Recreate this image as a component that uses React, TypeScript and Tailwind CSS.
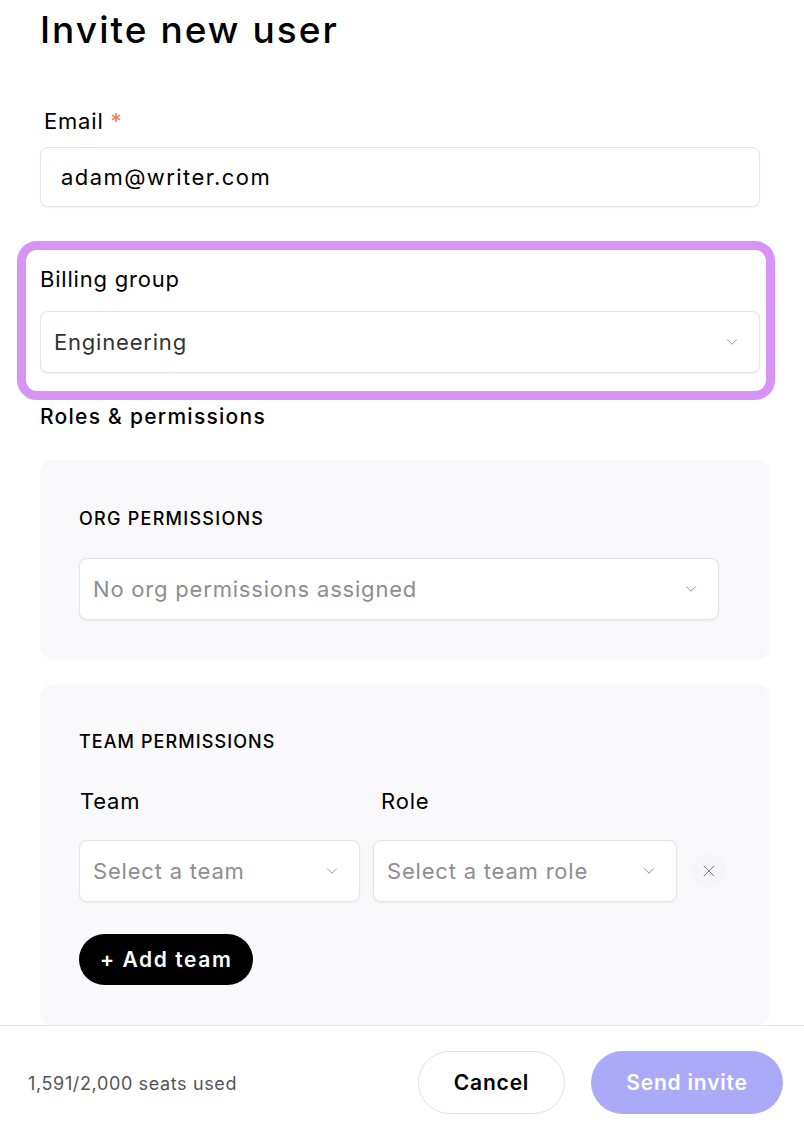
import { ChevronDown, X } from 'lucide-react'

const font = { fontFamily: 'Inter, "Noto Sans", sans-serif' }

function Select({ value, placeholder, className = '' }: { value?: string; placeholder?: string; className?: string }) {
  return (
    <div
      className={`flex h-[62px] items-center justify-between rounded-lg border border-[#e4e4ea] bg-white pl-[13px] pr-[18px] shadow-[0_1px_2px_rgba(0,0,0,0.06)] ${className}`}
    >
      <span className={`text-[22px] ${value ? 'text-[#333333]' : 'text-[#8d8d92]'}`}>{value ?? placeholder}</span>
      <ChevronDown className="h-[18px] w-[18px] text-[#8a8a90]" strokeWidth={1.2} />
    </div>
  )
}

export default function App() {
  return (
    <div className="flex h-[1144px] w-[804px] flex-col overflow-hidden bg-white tracking-[0.05em] text-black" style={font}>
      {/* scrolling body */}
      <div className="h-[1025px] overflow-hidden">
        <h1 className="ml-[40px] mt-[6px] text-[37px] font-medium leading-[48px] tracking-[0.055em]">Invite new user</h1>

        <div className="ml-[40px] mr-[44px] mt-[53px]">
          <label className="ml-[4px] block text-[22px] leading-[28px]">
            Email <span className="text-[#f07a55]">*</span>
          </label>
          <div className="mt-[12px] flex h-[60px] items-center rounded-lg border border-[#e4e4ea] px-[20px] shadow-[0_1px_2px_rgba(0,0,0,0.06)]">
            <span className="text-[22px] tracking-[0.065em]">adam@writer.com</span>
          </div>
        </div>

        {/* highlighted billing group */}
        <div className="ml-[17px] mr-[29px] mt-[34px] rounded-[20px] border-[9px] border-[#d894f4] pb-[18px] pl-[14px] pr-[6px] pt-[15px]">
          <label className="block text-[22px] leading-[28px]">Billing group</label>
          <Select value="Engineering" className="mt-[18px]" />
        </div>

        <div className="ml-[40px] mr-[34px]">
          <h2 className="mt-[3px] text-[21px] font-medium leading-[28px] tracking-[0.06em]">Roles &amp; permissions</h2>

          <div className="mt-[29px] rounded-xl bg-[#f9f9fb] pb-[39px] pl-[39px] pr-[51px] pt-[46px]">
            <h3 className="text-[18px] font-medium uppercase leading-[26px] tracking-[0.07em]">Org permissions</h3>
            <Select placeholder="No org permissions assigned" className="mt-[26px]" />
          </div>

          <div className="mt-[26px] rounded-xl bg-[#f9f9fb] pb-[40px] pl-[39px] pr-[40px] pt-[44px]">
            <h3 className="text-[18px] font-medium uppercase leading-[26px] tracking-[0.06em]">Team permissions</h3>
            <div className="mt-[32px] flex">
              <span className="ml-[1px] w-[301px] text-[22px] leading-[28px]">Team</span>
              <span className="text-[22px] leading-[28px]">Role</span>
            </div>
            <div className="mt-[25px] flex items-center gap-[13px]">
              <Select placeholder="Select a team" className="w-[281px]" />
              <Select placeholder="Select a team role" className="w-[304px]" />
              <button className="ml-[2px] flex h-[34px] w-[34px] items-center justify-center rounded-full bg-[#f6f6f8]">
                <X className="h-[20px] w-[20px] text-[#7c7c82]" strokeWidth={1.2} />
              </button>
            </div>
            <button className="mt-[32px] flex h-[51px] items-center rounded-full bg-black px-[21px] text-[21px] font-semibold tracking-[0.075em] text-white">
              + Add team
            </button>
          </div>
        </div>
      </div>

      {/* footer */}
      <div className="flex flex-1 items-start justify-between border-t border-[#e6e6ea] pl-[28px] pr-[21px] pt-[25px]">
        <span className="mt-[19px] text-[18px] tracking-[0.035em] text-[#555558]">1,591/2,000 seats used</span>
        <div className="flex items-center gap-[26px]">
          <button className="h-[63px] w-[147px] rounded-full border border-[#e2e2e6] bg-white text-[21px] font-semibold">Cancel</button>
          <button className="h-[63px] w-[192px] rounded-full bg-[#aca9f9] text-[21px] font-semibold text-white">Send invite</button>
        </div>
      </div>
    </div>
  )
}
